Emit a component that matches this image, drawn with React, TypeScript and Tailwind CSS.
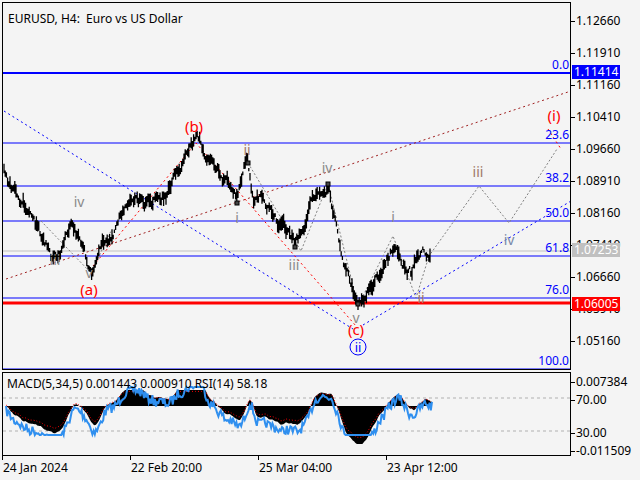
import React from 'react';

const f = "font-['Liberation_Sans',Arial,sans-serif]";

// price -> y (chart panel coordinates)
const py = (p: number) => 19 + (1.1266 - p) * 4266.7;

const way: [number, number][] = [
  [3, 172], [15, 195], [30, 215], [50, 255], [70, 225], [90, 272], [110, 228], [125, 195],
  [150, 205], [165, 190], [195, 145], [215, 165], [235, 192], [246, 152], [252, 195],
  [270, 205], [295, 245], [315, 192], [328, 183], [336, 225], [345, 270], [357, 305],
  [372, 282], [395, 242], [410, 268], [420, 248], [430, 255],
];

function rnd(seed: number) {
  let s = seed;
  return () => {
    s = (s * 16807) % 2147483647;
    return s / 2147483647;
  };
}

function buildBars() {
  const r = rnd(42);
  const bars: { x: number; lo: number; hi: number; c: number }[] = [];
  let drift = 0;
  for (let x = 3; x <= 430; x += 1.2) {
    let i = 0;
    while (i < way.length - 2 && way[i + 1][0] < x) i++;
    const [x0, y0] = way[i];
    const [x1, y1] = way[i + 1];
    const t = Math.min(1, Math.max(0, (x - x0) / (x1 - x0)));
    drift = drift * 0.85 + (r() - 0.5) * 9;
    const c = y0 + (y1 - y0) * t + drift;
    const h = 3 + r() * 12;
    bars.push({ x, lo: c + h / 2, hi: c - h / 2, c });
  }
  return bars;
}
const bars = buildBars();

function buildInd() {
  const r = rnd(7);
  let fast = bars[0].c;
  let slow = bars[0].c;
  return bars.map((b) => {
    fast += (b.c - fast) * 0.25;
    slow += (b.c - slow) * 0.05;
    const h = (slow - fast) * 0.9;
    const rsi = Math.min(62, Math.max(14, 38 - h * 1.1 + (r() - 0.5) * 10));
    return { x: b.x, h: Math.max(-38, Math.min(16, h)), rsi };
  });
}
const ind = buildInd();

const fib = [
  { y: 72, t: '0.0', w: 2 },
  { y: 142, t: '23.6', w: 1 },
  { y: 185, t: '38.2', w: 1 },
  { y: 220, t: '50.0', w: 1 },
  { y: 255, t: '61.8', w: 1 },
  { y: 297, t: '76.0', w: 1 },
  { y: 368, t: '100.0', w: 1 },
];

const labels: { x: number; y: number; t: string; c: string; s?: number }[] = [
  { x: 193, y: 131, t: '(b)', c: '#ff0000', s: 15 },
  { x: 246, y: 154, t: 'ii', c: '#a07868' },
  { x: 78, y: 206, t: 'iv', c: '#8a8a8a' },
  { x: 236, y: 222, t: 'i', c: '#8a8a8a' },
  { x: 326, y: 172, t: 'iv', c: '#8a8a8a' },
  { x: 293, y: 269, t: 'iii', c: '#8a8a8a' },
  { x: 54, y: 264, t: 'iii', c: '#8a8a8a' },
  { x: 88, y: 277, t: 'v', c: '#8a8a8a' },
  { x: 88, y: 294, t: '(a)', c: '#ff0000', s: 15 },
  { x: 392, y: 221, t: 'i', c: '#8a8a8a' },
  { x: 477, y: 176, t: 'iii', c: '#a07868' },
  { x: 508, y: 244, t: 'iv', c: '#7888a8' },
  { x: 420, y: 302, t: 'ii', c: '#a07868' },
  { x: 355, y: 322, t: 'v', c: '#8a8a8a' },
  { x: 355, y: 334, t: '(c)', c: '#ff0000', s: 15 },
  { x: 553, y: 120, t: '(i)', c: '#ff0000', s: 15 },
];

const priceAxis = ['1.12660', '1.11910', '1.11160', '1.10410', '1.09660', '1.08910', '1.08160', '1.07410', '1.06660', '1.05910', '1.05160'];

export default function App() {
  const lo = bars.map((b) => `M${b.x} ${b.lo}V${b.hi}`).join('');
  const hist = 'M3 33 ' + ind.map((d) => `L${d.x} ${33 - d.h}`).join(' ') + ` L${ind[ind.length - 1].x} 33Z`;
  const rsi = ind.map((d) => `${d.x},${d.rsi}`).join(' ');
  return (
    <div className={`w-[640px] h-[480px] bg-[#f4f4f4] text-black text-[12px] ${f} flex flex-col pt-[2px] pl-[2px]`}>
      <div className="flex">
        <div className="relative w-[569px] h-[368px] border border-black bg-[#f4f4f4] overflow-hidden">
          <svg width="569" height="368" className="absolute left-0 top-0" viewBox="2 2 569 368">
            {fib.map((l) => (
              <line key={l.t} x1="2" x2="570" y1={l.y} y2={l.y} stroke="#0000ff" strokeWidth={l.w} />
            ))}
            <line x1="2" x2="570" y1="250" y2="250" stroke="#c0c0c0" />
            <line x1="2" x2="570" y1="302" y2="302" stroke="#ff0000" strokeWidth="3" />
            <line x1="3" y1="110" x2="352" y2="328" stroke="#0000ff" strokeDasharray="2 3" />
            <line x1="362" y1="324" x2="570" y2="200" stroke="#0000ff" strokeDasharray="2 3" />
            <line x1="5" y1="278" x2="570" y2="90" stroke="#a02020" strokeDasharray="2 3" />
            <polyline points="92,265 195,142 355,325" fill="none" stroke="#ff0000" strokeDasharray="2 3" />
            <polyline points="547,128 560,148" fill="none" stroke="#ff0000" strokeDasharray="2 3" />
            <polyline points="247,162 300,250 327,183 357,305 392,235 415,297 428,255 478,185 508,222 556,148" fill="none" stroke="#808080" strokeDasharray="2 2" />
            <polyline points="40,220 90,272 110,230" fill="none" stroke="#808080" strokeDasharray="2 2" />
            <path d={lo} stroke="#000" strokeWidth="1.3" />
            {[[236, 202], [247, 162], [327, 183], [357, 303], [294, 246]].map(([x, y]) => (
              <rect key={x} x={x - 2} y={y - 2} width="4" height="4" fill="#444" stroke="#000" />
            ))}
            {fib.map((l) => (
              <text key={l.t} x="568" y={l.y - 4} textAnchor="end" fill="#0000ff" fontSize="12">{l.t}</text>
            ))}
            {labels.map((l, i) => (
              <text key={i} x={l.x} y={l.y} textAnchor="middle" fill={l.c} fontSize={l.s ?? 14}>{l.t}</text>
            ))}
            <circle cx="357" cy="346" r="8" fill="none" stroke="#0000ff" />
            <text x="357" y="351" textAnchor="middle" fill="#0000ff" fontSize="13">ii</text>
          </svg>
          <div className="absolute left-[5px] top-[7px] text-[12px] whitespace-pre">EURUSD, H4:  Euro vs US Dollar</div>
        </div>
        <div className="relative w-[69px] h-[368px]">
          {priceAxis.map((p) => {
            const y = py(parseFloat(p)) - 2;
            return (
              <div key={p} className="absolute left-0 flex items-center" style={{ top: y - 7 }}>
                <div className="w-[4px] h-px bg-black" />
                <span className="ml-[1px]">{p}</span>
              </div>
            );
          })}
          <div className="absolute left-[1px] top-[63px] px-[2px] bg-[#0000ff] text-white leading-[14px]">1.11414</div>
          <div className="absolute left-[1px] top-[241px] px-[2px] bg-[#c0c0c0] text-white leading-[14px]">1.07253</div>
          <div className="absolute left-[1px] top-[295px] px-[2px] bg-[#ff0000] text-white leading-[14px]">1.06005</div>
        </div>
      </div>
      <div className="flex mt-[2px]">
        <div className="relative w-[569px] h-[84px] border border-black overflow-hidden">
          <svg width="569" height="84" className="absolute left-0 top-0">
            <line x1="0" x2="569" y1="25" y2="25" stroke="#b0b0b0" strokeDasharray="3 3" />
            <line x1="0" x2="569" y1="58" y2="58" stroke="#b0b0b0" strokeDasharray="3 3" />
            <path d={hist} fill="#000" />
            <polyline points={ind.map((d) => `${d.x},${33 - d.h * 0.85 - 1}`).join(' ')} fill="none" stroke="#ff0000" strokeDasharray="1 2" />
            <polyline points={rsi} fill="none" stroke="#2f8fef" strokeWidth="2" />
          </svg>
          <div className="absolute left-[4px] top-[2px]">MACD(5,34,5) 0.001443 0.000910 RSI(14) 58.18</div>
        </div>
        <div className="relative w-[69px] h-[84px]">
          {[['0.007384', 1], ['70.00', 19], ['30.00', 52], ['-0.011509', 70]].map(([t, y]) => (
            <div key={t as string} className="absolute left-0 flex items-center" style={{ top: y as number }}>
              <div className="w-[4px] h-px bg-black" />
              <span className="ml-[1px]">{t}</span>
            </div>
          ))}
        </div>
      </div>
      <div className="relative h-[20px] w-[569px]">
        {[['24 Jan 2024', 0], ['22 Feb 20:00', 128], ['25 Mar 04:00', 256], ['23 Apr 12:00', 384]].map(([t, x]) => (
          <div key={t as string} className="absolute top-0" style={{ left: x as number }}>
            <div className="w-px h-[4px] bg-black" />
            <div className="ml-[1px] -mt-[1px]">{t}</div>
          </div>
        ))}
      </div>
    </div>
  );
}
